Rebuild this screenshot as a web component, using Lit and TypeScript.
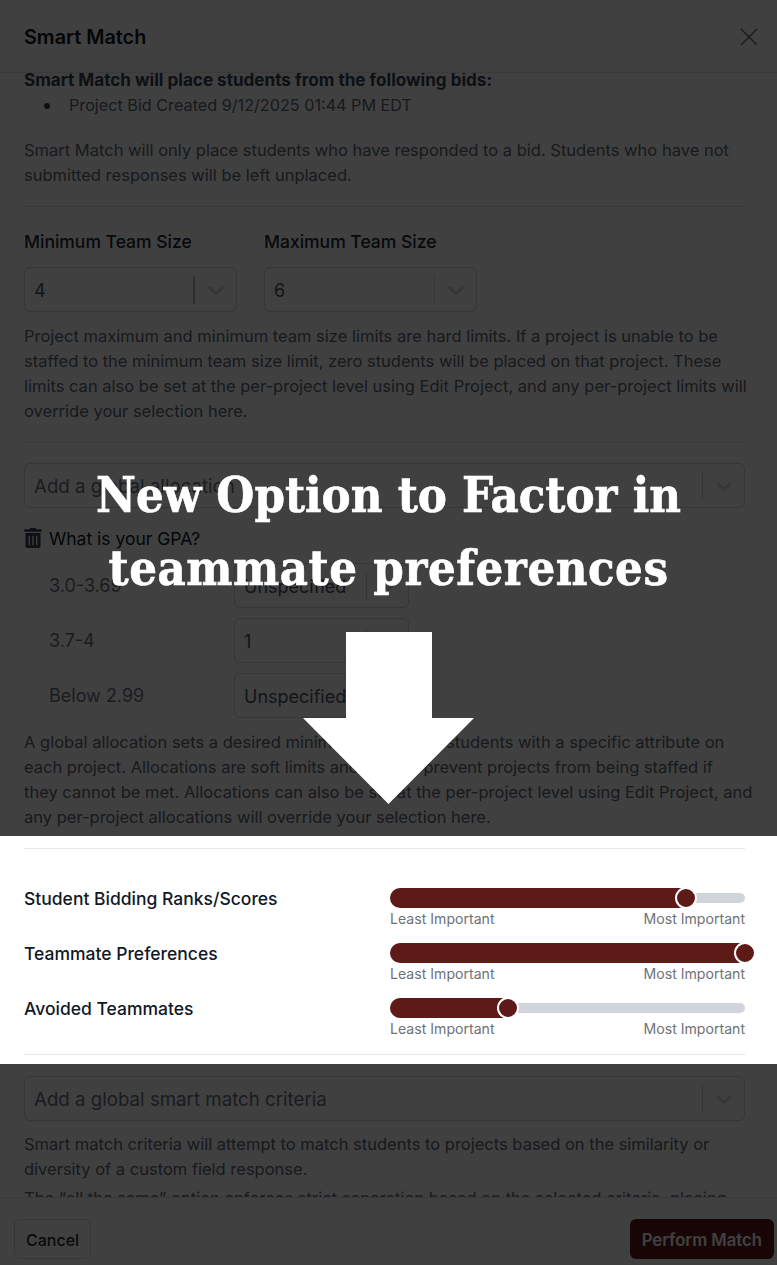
import { LitElement, html, css } from "lit";
import { customElement } from "lit/decorators.js";

const chevron = html`<svg class="chev" viewBox="0 0 20 20" width="20" height="20" fill="none" stroke="currentColor" stroke-width="3"><path d="M3 7l7 6.500 7-6.500"/></svg>`;

@customElement("app-root")
export class AppRoot extends LitElement {
  static styles = css`
    :host { display: block; width: 777px; height: 1265px; overflow: hidden; position: relative; background: #fff; font-family: Inter, "Liberation Sans", sans-serif; color: #111827; }
    * { box-sizing: border-box; }
    .modal { height: 1265px; display: flex; flex-direction: column; }
    .head { height: 73px; flex: none; display: flex; align-items: center; justify-content: space-between; padding: 2px 19px 0 24px; border-bottom: 1px solid #e5e7eb; }
    .title { font-size: 19.800px; font-weight: 600; color: #111827; }
    .body { flex: 1; min-height: 0; overflow: hidden; padding: 0 32px 0 24px; font-size: 16.500px; line-height: 25px; color: #5f6773; }
    .lead { font-weight: 700; font-size: 17.100px; color: #374151; margin: -6px 0 1px; white-space: nowrap; }
    .li { display: flex; align-items: center; padding-left: 20px; font-size: 16.200px; }
    .dot { width: 6px; height: 6px; border-radius: 50%; background: #374151; margin-right: 19px; }
    p { margin: 0; }
    .p1 { margin-top: 20px; }
    .wide { margin-right: -7px; white-space: nowrap; }
    hr { border: 0; border-top: 1px solid #e5e7eb; margin: 0; }
    .sizes { display: flex; gap: 27px; margin-top: 23px; }
    .lab { color: #1f2937; font-weight: 500; font-size: 17.500px; line-height: 24px; margin-bottom: 13px; white-space: nowrap; }
    .sel { display: flex; align-items: center; height: 45px; border: 1px solid #d1d5db; border-radius: 6px; padding-left: 9px; color: #4b5563; font-size: 18px; background: #fff; }
    .val { flex: 1; overflow: hidden; white-space: nowrap; padding-top: 2px; }
    .sep { width: 1px; height: 28px; background: #d1d5db; }
    .thick .sep { width: 2px; background: #b8bcc4; }
    .cw { width: 41px; display: flex; justify-content: center; color: #d1d5db; }
    .w { width: 213px; }
    .full { width: 100%; font-size: 18.700px; color: #6b7280; }
    .attr { display: flex; align-items: center; gap: 7px; margin-top: 18px; height: 24px; color: #111827; font-size: 17.500px; }
    .row { display: flex; align-items: center; padding-left: 25px; margin-top: 10px; }
    .row.first { margin-top: 13px; }
    .row .name { width: 185px; font-size: 18px; color: #6b7280; }
    .row .sel { width: 175px; }
    .sliders { display: flex; flex-direction: column; gap: 15px; margin: 39px 0 16px; }
    .srow { display: flex; height: 40px; }
    .sname { width: 366px; color: #111827; font-weight: 500; font-size: 17.500px; line-height: 21px; white-space: nowrap; }
    .track { position: relative; width: 355px; }
    .rail { position: absolute; left: 0; right: 0; top: 5px; height: 10px; border-radius: 5px; background: #d1d5db; }
    .fill { position: absolute; left: 0; top: 0; height: 20px; border-radius: 10px 0 0 10px; background: #5e1a17; }
    .thumb { position: absolute; top: -1px; width: 22px; height: 22px; margin-left: -11px; border-radius: 50%; background: #5e1a17; border: 2px solid #fff; }
    .ends { position: absolute; left: 0; right: 0; top: 20px; display: flex; justify-content: space-between; font-size: 14.100px; line-height: 22px; color: #6f7276; }
    .foot { height: 68px; flex: none; display: flex; align-items: flex-end; justify-content: space-between; padding: 0 3px 6px 14px; border-top: 1px solid #e5e7eb; background: #fff; position: relative; }
    .btn { height: 40px; display: flex; align-items: center; border-radius: 6px; font-size: 16px; font-weight: 500; padding-top: 2px; }
    .cancel { border: 1px solid #d1d5db; padding-left: 11px; padding-right: 11px; color: #1f2937; }
    .go { background: #5e1a17; color: #fff; padding-left: 12px; padding-right: 12px; font-size: 16.700px; font-weight: 600; white-space: nowrap; }

    .shade { position: absolute; left: 0; width: 777px; background: rgba(0,0,0,.75); pointer-events: none; }
    .s1 { top: 0; height: 836px; }
    .s2 { top: 1064px; height: 201px; }
    .headline { position: absolute; left: 0; right: 0; top: 458px; text-align: center; font-family: "DejaVu Serif Condensed", "DejaVu Serif", "Liberation Serif", serif; font-stretch: condensed; font-weight: 700; font-size: 48.500px; line-height: 73px; color: #fff; white-space: nowrap; -webkit-text-stroke: 0.600px #fff; }
    .line2 { letter-spacing: 0.550px; }
    .arrow { position: absolute; left: 303px; top: 632px; }
  `;
  sl(name: string, pct: number) {
    return html`<div class="srow"><div class="sname">${name}</div>
      <div class="track"><div class="rail"></div>
        <div class="fill" style="width:${pct}%"></div>
        <div class="thumb" style="left:${pct}%"></div>
        <div class="ends"><span>Least Important</span><span>Most Important</span></div></div></div>`;
  }
  sel(v: string, cls: string) {
    return html`<div class="sel ${cls}"><span class="val">${v}</span><span class="sep"></span><span class="cw">${chevron}</span></div>`;
  }
  render() {
    return html`<div class="modal">
      <div class="head"><span class="title">Smart Match</span>
        <svg width="18" height="18" viewBox="0 0 18 18" fill="none" stroke="#6b7280" stroke-width="1.500"><path d="M1 1l16 16M17 1L1 17"/></svg></div>
      <div class="body">
        <p class="lead">Smart Match will place students from the following bids:</p>
        <div class="li"><span class="dot"></span>Project Bid Created 9/12/2025 01:44 PM EDT</div>
        <p class="p1">Smart Match will only place students who have responded to a bid. Students who have not submitted responses will be left unplaced.</p>
        <hr style="margin-top:18px" />
        <div class="sizes">
          <div class="w"><div class="lab">Minimum Team Size</div>${this.sel("4", "thick")}</div>
          <div class="w"><div class="lab">Maximum Team Size</div>${this.sel("6", "")}</div>
        </div>
        <p class="wide" style="margin-top:12px">Project maximum and minimum team size limits are hard limits. If a project is unable to be<br />staffed to the minimum team size limit, zero students will be placed on that project. These<br />limits can also be set at the per-project level using Edit Project, and any per-project limits will<br />override your selection here.</p>
        <hr style="margin-top:18px;margin-bottom:20px" />
        ${this.sel("Add a global allocation", "full")}
        <div class="attr"><svg width="18" height="20" viewBox="0 0 448 512" fill="#374151"><path d="M32 464a48 48 0 0 0 48 48h288a48 48 0 0 0 48-48V128H32zm272-256a16 16 0 0 1 32 0v224a16 16 0 0 1-32 0zm-96 0a16 16 0 0 1 32 0v224a16 16 0 0 1-32 0zm-96 0a16 16 0 0 1 32 0v224a16 16 0 0 1-32 0zM432 32H312l-9.400-18.700A24 24 0 0 0 281.100 0H166.800a23.720 23.720 0 0 0-21.400 13.300L136 32H16A16 16 0 0 0 0 48v32a16 16 0 0 0 16 16h416a16 16 0 0 0 16-16V48a16 16 0 0 0-16-16z"/></svg>What is your GPA?</div>
        <div class="row first"><span class="name">3.0-3.69</span>${this.sel("Unspecified", "")}</div>
        <div class="row"><span class="name">3.7-4</span>${this.sel("1", "")}</div>
        <div class="row"><span class="name">Below 2.99</span>${this.sel("Unspecified", "")}</div>
        <p class="wide" style="margin-top:12px">A global allocation sets a desired minimum number of students with a specific attribute on<br />each project. Allocations are soft limits and will not prevent projects from being staffed if<br />they cannot be met. Allocations can also be set at the per-project level using Edit Project, and<br />any per-project allocations will override your selection here.</p>
        <hr style="margin-top:18px" />
        <div class="sliders">${this.sl("Student Bidding Ranks/Scores", 83.400)}${this.sl("Teammate Preferences", 100)}${this.sl("Avoided Teammates", 33.200)}</div>
        <hr />
        <div style="height:21px"></div>
        ${this.sel("Add a global smart match criteria", "full")}
        <p style="margin-top:11px">Smart match criteria will attempt to match students to projects based on the similarity or diversity of a custom field response.</p>
        <p style="margin-top:4px">The “all the same” option enforces strict separation based on the selected criteria, placing</p>
      </div>
      <div class="foot"><div class="btn cancel">Cancel</div><div class="btn go">Perform Match</div></div>
    </div>
    <div class="shade s1"></div><div class="shade s2"></div>
    <div class="headline">New Option to Factor in<br /><span class="line2">teammate preferences</span></div>
    <svg class="arrow" width="171" height="172" viewBox="0 0 171 172"><path fill="#fff" d="M43 0h86v86h42L85.500 172 0 86h43z"/></svg>`;
  }
}
